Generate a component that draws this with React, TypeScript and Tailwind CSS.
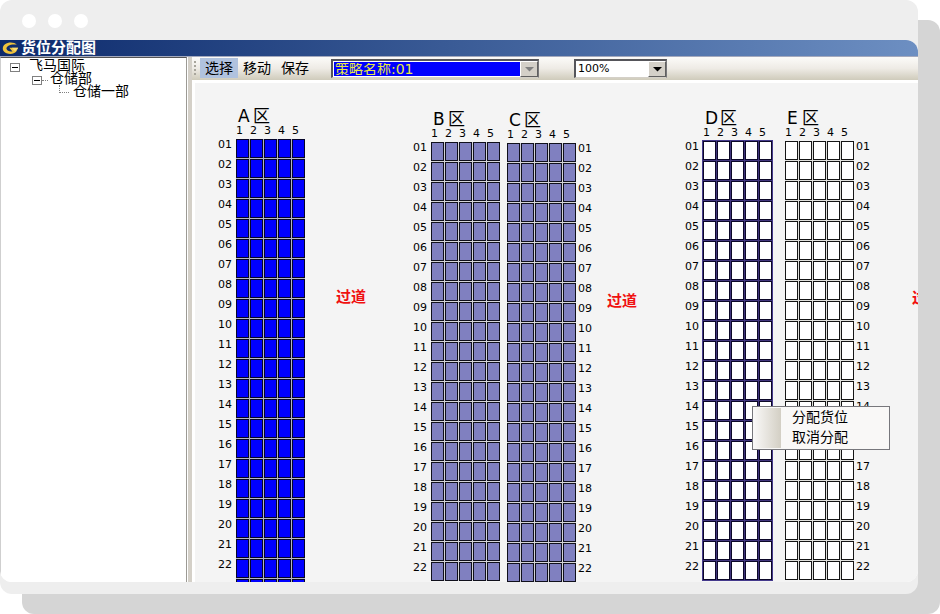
import React, { useState } from "react";

type Tone = "assigned" | "partial" | "selected" | "free";

type Zone = {
  name: string;
  tone: Tone;
  labels: "left" | "right";
  rows: number;
  offset: string;
};

const CELL_TONES: Record<Tone, string> = {
  assigned: "border-[#05052a] bg-[#0000ff]",
  partial: "border-[#10101c] bg-[#8080c0]",
  selected: "border-[#0c0828] bg-white",
  free: "border-[#151515] bg-white",
};

const GRID_TONES: Record<Tone, string> = {
  assigned: "bg-[#b4b4c4]",
  partial: "bg-[#d4d4d8]",
  selected: "bg-[#40347c] outline outline-1 outline-[#453a8c]",
  free: "bg-[#e0e0dc]",
};

const COLUMNS = [1, 2, 3, 4, 5];
const LABELLED_ROWS = 22;

function RowLabels({ side }: { side: "left" | "right" }) {
  return (
    <ol className={`w-[18px] shrink-0 pt-[31px] ${side === "right" ? "pl-[2px]" : ""}`}>
      {Array.from({ length: LABELLED_ROWS }, (_, i) => (
        <li key={i} className="h-5 text-[11px] leading-3">
          {String(i + 1).padStart(2, "0")}
        </li>
      ))}
    </ol>
  );
}

function ZoneBlock({ zone }: { zone: Zone }) {
  return (
    <section className={`flex shrink-0 ${zone.offset}`}>
      {zone.labels === "left" && <RowLabels side="left" />}
      <div className="w-[69px] shrink-0">
        <h2 className="flex h-4 whitespace-nowrap pl-[2px] text-[17px] leading-4">
          <span className="w-[15px]">{zone.name}</span>
          <span>区</span>
        </h2>
        <div className="flex h-[15px] text-[11px] leading-[14px]">
          {COLUMNS.map((c) => (
            <span key={c} className="w-[14px] shrink-0">
              {c}
            </span>
          ))}
        </div>
        <div className={`grid grid-cols-5 gap-px ${GRID_TONES[zone.tone]}`}>
          {Array.from({ length: zone.rows * 5 }, (_, i) => (
            <div key={i} className={`h-[19px] border ${CELL_TONES[zone.tone]}`} />
          ))}
        </div>
      </div>
      {zone.labels === "right" && <RowLabels side="right" />}
    </section>
  );
}

function Aisle({ className }: { className: string }) {
  return (
    <p className={`shrink-0 whitespace-nowrap text-[15px] font-bold leading-4 text-[#f01010] ${className}`}>
      过道
    </p>
  );
}

function Combo({
  label,
  value,
  width,
  field,
  arrow,
}: {
  label: string;
  value: string;
  width: string;
  field: string;
  arrow: string;
}) {
  return (
    <div
      className={`relative flex h-[19px] border-2 border-b border-r border-[#55555a] border-b-[#d4d0c8] border-r-[#77777a] bg-white p-px ${width}`}
    >
      <select
        aria-label={label}
        defaultValue={value}
        className={`min-w-0 flex-1 appearance-none rounded-none border-0 p-0 pl-px leading-3 outline-none ${field}`}
      >
        <option>{value}</option>
      </select>
      <span className="pointer-events-none absolute bottom-0 right-0 top-0 flex w-[18px] items-center justify-center border border-b-[#606060] border-l-white border-r-[#606060] border-t-white bg-[#d4d0c8]">
        <svg width="9" height="5" viewBox="0 0 9 5" className={arrow}>
          <path d="M0 0h9L4.500 4.500z" fill="currentColor" />
        </svg>
      </span>
    </div>
  );
}

function Toggle() {
  return (
    <button
      type="button"
      aria-label="折叠"
      className="flex h-[9px] w-[10px] shrink-0 items-center justify-center border border-[#808080] bg-white"
    >
      <span className="h-px w-[6px] bg-black" />
    </button>
  );
}

function Tree() {
  return (
    <nav
      aria-label="仓库"
      className="w-[187px] shrink-0 border-l border-r border-t border-l-[#cfcfcf] border-r-[#9c9a94] border-t-[#555] bg-white pt-px text-[14px] leading-[13px]"
    >
      <ul>
        <li>
          <div className="flex h-[13px] items-end pl-[9px]">
            <Toggle />
            <span className="pl-[9px]">飞马国际</span>
          </div>
          <ul>
            <li>
              <div className="flex h-[13px] items-end pl-[31px]">
                <Toggle />
                <span className="mb-1 mr-[2px] w-[6px] border-t border-dotted border-[#808080]" />
                <span>仓储部</span>
              </div>
              <ul>
                <li className="flex h-[13px] pl-[58px]">
                  <span className="mr-[4px] h-[8px] w-[10px] border-b border-l border-dotted border-[#808080]" />
                  <span>仓储一部</span>
                </li>
              </ul>
            </li>
          </ul>
        </li>
      </ul>
    </nav>
  );
}

function Logo() {
  return (
    <svg width="18" height="14" viewBox="0 0 18 14" className="shrink-0">
      <path
        d="M15.800 3.800C13.500 1 7.500.600 4 3.200.500 6 1.300 10.500 5.500 12.200c3.500 1.300 7.800.800 9.800-1.700l1.900-3.800H8.300l3.200 3.700c-2.500.700-5.500-.500-6-2.600C5 5.200 10 2.800 15.800 3.800z"
        fill="#eec23c"
      />
      <path d="M10.800 6.700h6.400l-2.600 3.300-1.300-.200z" fill="#f8dc78" />
    </svg>
  );
}

const MODES = ["选择", "移动", "保存"];

const ZONES: Record<string, Zone> = {
  A: { name: "A", tone: "assigned", labels: "left", rows: 23, offset: "pt-[25px]" },
  B: { name: "B", tone: "partial", labels: "left", rows: 22, offset: "pt-[28px]" },
  C: { name: "C", tone: "partial", labels: "right", rows: 22, offset: "ml-[7px] pt-[29px]" },
  D: { name: "D", tone: "selected", labels: "left", rows: 22, offset: "pt-[27px]" },
  E: { name: "E", tone: "free", labels: "right", rows: 22, offset: "ml-[13px] pt-[27px]" },
};

export default function App() {
  const [mode, setMode] = useState("选择");

  return (
    <div className="relative flex h-screen flex-col overflow-hidden bg-white pb-5 pr-[22px] font-['DejaVu_Sans','Noto_Sans_CJK_SC',sans-serif] text-black">
      <div className="absolute bottom-0 left-[22px] right-0 top-5 rounded-[12px] bg-[#d5d5d5]" />
      <div className="relative flex min-h-0 flex-1 flex-col rounded-[12px] bg-[#eeeeee] pb-3">
        <div className="flex h-10 shrink-0 items-center gap-3 pl-[22px] pt-[2px]">
          <span className="size-[14px] rounded-full bg-white" />
          <span className="size-[14px] rounded-full bg-white" />
          <span className="size-[14px] rounded-full bg-white" />
        </div>
        <div className="flex min-h-0 flex-1 flex-col overflow-hidden rounded-b-[12px] rounded-tr-[12px] bg-white">
          <header className="flex h-[17px] shrink-0 items-center border-b border-[#a4a9bd] bg-linear-to-r from-[#0d2a6c] to-[#6d8fc2] pl-px">
            <Logo />
            <h1 className="pl-[2px] text-[15px] font-bold leading-4 text-white">货位分配图</h1>
          </header>
          <div className="flex min-h-0 flex-1">
            <Tree />
            <div className="w-[5px] shrink-0 border-l border-white bg-[#d4d0c8]" />
            <div className="flex min-w-0 flex-1 flex-col">
              <div
                role="toolbar"
                className="flex h-[23px] shrink-0 bg-linear-to-b from-[#fcfbf9] via-[#eeebe5] to-[#cfcbbb] pl-[2px] pt-px"
              >
                <span className="mr-[4px] mt-[3px] h-[14px] w-[2px] border-l-2 border-dotted border-[#a8a59c]" />
                {MODES.map((m) => (
                  <button
                    key={m}
                    type="button"
                    aria-pressed={m === mode}
                    onClick={() => setMode(m)}
                    className={`h-5 px-[5px] text-[14px] leading-5 ${m === mode ? "bg-[#b0c2de]" : ""}`}
                  >
                    {m}
                  </button>
                ))}
                <div className="ml-[17px] mt-px">
                  <Combo
                    label="策略名称"
                    value="策略名称:01"
                    width="w-[208px]"
                    field="bg-[#0000ff] text-[14px] text-[#e8e840]"
                    arrow="text-[#808080]"
                  />
                </div>
                <div className="ml-[35px] mt-px">
                  <Combo
                    label="缩放"
                    value="100%"
                    width="w-[93px]"
                    field="bg-white text-[11px] text-black"
                    arrow="text-black"
                  />
                </div>
              </div>
              <main className="relative mt-[3px] flex min-h-0 flex-1 items-start overflow-hidden border-l-[3px] border-white bg-[#f4f4f4] pl-[23px]">
                <ZoneBlock zone={ZONES.A} />
                <Aisle className="ml-[31px] mr-[47px] mt-[206px]" />
                <ZoneBlock zone={ZONES.B} />
                <ZoneBlock zone={ZONES.C} />
                <Aisle className="ml-[13px] mr-12 mt-[210px]" />
                <ZoneBlock zone={ZONES.D} />
                <ZoneBlock zone={ZONES.E} />
                <Aisle className="ml-10 mt-[207px]" />
                <div
                  role="menu"
                  className="absolute left-[557px] top-[323px] flex w-[138px] border border-[#77777c] bg-[#f9f8f7] p-px"
                >
                  <div className="w-[27px] bg-linear-to-r from-[#f9f8f7] to-[#d3cfc4]" />
                  <div className="flex flex-1 flex-col">
                    <button role="menuitem" type="button" className="flex h-5 pl-[11px] text-left text-[14px] leading-[18px]">
                      分配货位
                    </button>
                    <button role="menuitem" type="button" className="flex h-5 pl-[11px] text-left text-[14px] leading-[18px]">
                      取消分配
                    </button>
                  </div>
                </div>
              </main>
            </div>
          </div>
        </div>
      </div>
    </div>
  );
}
